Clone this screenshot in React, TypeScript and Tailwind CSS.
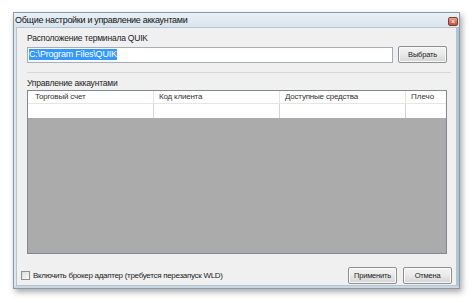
import React from "react";

const font = { fontFamily: '"Liberation Sans", "DejaVu Sans", sans-serif' };

const btn =
  "h-[17px] border border-[#8e8f8f] rounded-[2px] bg-gradient-to-b from-[#f4f4f4] via-[#e9e9e9] to-[#d4d4d4] text-[7.5px] leading-none text-[#222] tracking-[-0.2px] shadow-[inset_0_0_0_1px_#fafafa]";

export default function App() {
  return (
    <div className="w-[474px] h-[303px] bg-white overflow-hidden pt-[12px] pl-[13px]" style={font}>
      <div className="w-[447px] h-[277px] flex flex-col border border-[#8a9aa8] bg-[#dde7ef] shadow-[2px_3px_6px_rgba(0,0,0,0.35)]">
        {/* title bar */}
        <div className="h-[14px] flex items-center justify-between pl-[1px] pr-[1px] bg-gradient-to-b from-[#e9f0f6] to-[#d9e4ee]">
          <span className="text-[9px] leading-none text-[#111] tracking-[-0.3px] mt-[1px]">Общие настройки и управление аккаунтами</span>
          <div className="w-[10px] h-[9px] mt-[2px] rounded-[2px] bg-gradient-to-b from-[#e8a090] to-[#c0503c] border border-[#8a3a2c] flex items-center justify-center text-[7px] leading-none text-white">×</div>
        </div>
        <div className="flex-1 flex flex-row">
          <div className="w-[2px] bg-[#dbe6ef]" />
          <div className="flex-1 flex flex-col bg-[#f0f0f0] border border-[#b8c3cc] pl-[10px] pr-[9px] pt-[4px]">
            <div className="text-[8.5px] leading-[12px] text-[#222] tracking-[-0.2px]">Расположение терминала QUIK</div>
            <div className="flex flex-row items-center gap-[5px] mt-[2px]">
              <div className="flex-1 h-[16px] bg-white border border-[#a5acb5] flex items-center px-[1px]">
                <span className="text-[9px] leading-[11px] bg-[#3399ff] text-white tracking-[-0.2px]">C:\Program Files\QUIK</span>
              </div>
              <button className={btn + " w-[49px]"}>Выбрать</button>
            </div>
            <div className="mt-[9px] h-px bg-[#d8d8d8] mr-[-4px]" />
            <div className="mt-[4px] text-[8.5px] leading-[12px] text-[#222] tracking-[-0.2px]">Управление аккаунтами</div>
            <div className="mt-[1px] h-[164px] border border-[#828790] flex flex-col bg-[#ababab]">
              <div className="h-[13px] bg-white flex flex-row border-b border-[#e5e5e5] text-[8px] leading-[12px] text-[#333333] tracking-[-0.2px]">
                <div className="w-[126px] pl-[7px] border-r border-[#e5e5e5]">Торговый счет</div>
                <div className="w-[126px] pl-[5px] border-r border-[#e5e5e5]">Код клиента</div>
                <div className="w-[126px] pl-[5px] border-r border-[#e5e5e5]">Доступные средства</div>
                <div className="w-[40px] pl-[5px] text-[#333333] tracking-normal">Плечо</div>
              </div>
              <div className="h-[14px] bg-white flex flex-row">
                <div className="w-[126px] border-r border-[#d5d5d5]" />
                <div className="w-[126px] border-r border-[#d5d5d5]" />
                <div className="w-[126px] border-r border-[#d5d5d5]" />
                <div className="flex-1" />
              </div>
            </div>
            <div className="mt-auto mb-[1px] flex flex-row items-center">
              <div className="w-[9px] h-[9px] border border-[#8f8f8f] bg-gradient-to-br from-[#dcdcdc] to-[#fafafa] ml-[-6px]" />
              <span className="ml-[3px] text-[8px] leading-none text-[#222] tracking-[-0.3px]">Включить брокер адаптер (требуется перезапуск WLD)</span>
              <div className="flex-1" />
              <button className={btn + " w-[49px]"}>Применить</button>
              <button className={btn + " ml-[6px] w-[49px] mr-[-5px]"}>Отмена</button>
            </div>
          </div>
          <div className="w-[2px] bg-[#aac6dc]" />
        </div>
        <div className="h-[2px] bg-[#c9d7e3]" />
      </div>
    </div>
  );
}
